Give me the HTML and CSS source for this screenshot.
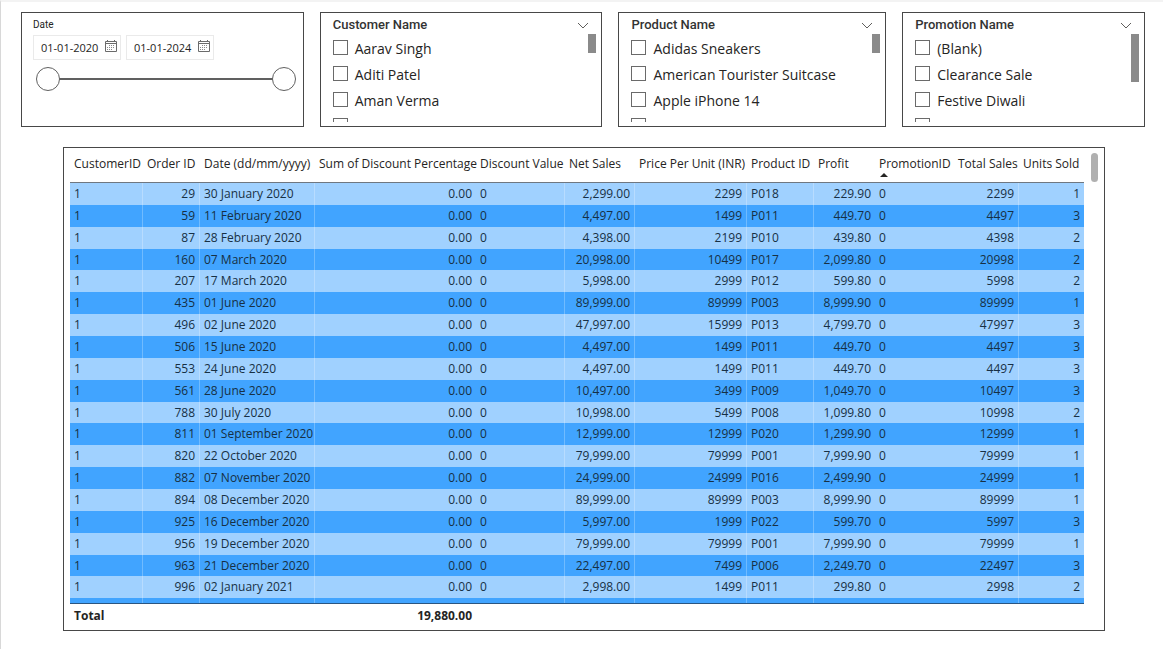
FILE: index.html
```html
<!DOCTYPE html>
<html lang="en">
<head>
<meta charset="utf-8">
<title>Sales report</title>
<link rel="stylesheet" href="styles.css">
</head>
<body>
<main class="report">
  <section class="slicers">
    <fieldset class="card date-card">
      <legend class="date-title">Date</legend>
      <div class="date-fields">
        <div class="date-field">
          <input class="date-input" type="text" value="01-01-2020" aria-label="Start date">
          <button class="icon-button" type="button" aria-label="Pick start date"><svg class="calendar" viewBox="0 0 12 12"><path class="calendar-frame" d="M.5 1.5h11v10H.5zM.5 3.5h11M2.5 0v2M9.5 0v2"/><path class="calendar-days" d="M4 5.5h6M2 7.5h8M2 9.5h6"/></svg></button>
        </div>
        <div class="date-field">
          <input class="date-input" type="text" value="01-01-2024" aria-label="End date">
          <button class="icon-button" type="button" aria-label="Pick end date"><svg class="calendar" viewBox="0 0 12 12"><path class="calendar-frame" d="M.5 1.5h11v10H.5zM.5 3.5h11M2.5 0v2M9.5 0v2"/><path class="calendar-days" d="M4 5.5h6M2 7.5h8M2 9.5h6"/></svg></button>
        </div>
      </div>
      <div class="range">
        <input class="range-input" type="range" min="0" max="100" value="0" aria-label="Range start">
        <input class="range-input" type="range" min="0" max="100" value="100" aria-label="Range end">
      </div>
    </fieldset>

    <section class="card list-card">
      <header class="list-header"><h2 class="list-title">Customer Name</h2><button class="icon-button" type="button" aria-label="Customer options"><svg class="chevron" viewBox="0 0 12 7"><path d="M1 1l5 5 5-5"/></svg></button></header>
      <div class="list-body">
        <div class="options">
          <label class="option"><input class="tick" type="checkbox">Aarav Singh</label>
          <label class="option"><input class="tick" type="checkbox">Aditi Patel</label>
          <label class="option"><input class="tick" type="checkbox">Aman Verma</label>
          <label class="option"><input class="tick" type="checkbox" aria-label="Next customer"></label>
        </div>
        <div class="list-thumb"></div>
      </div>
    </section>

    <section class="card list-card">
      <header class="list-header"><h2 class="list-title">Product Name</h2><button class="icon-button" type="button" aria-label="Product options"><svg class="chevron" viewBox="0 0 12 7"><path d="M1 1l5 5 5-5"/></svg></button></header>
      <div class="list-body">
        <div class="options">
          <label class="option"><input class="tick" type="checkbox">Adidas Sneakers</label>
          <label class="option"><input class="tick" type="checkbox">American Tourister Suitcase</label>
          <label class="option"><input class="tick" type="checkbox">Apple iPhone 14</label>
          <label class="option"><input class="tick" type="checkbox" aria-label="Next product"></label>
        </div>
        <div class="list-thumb"></div>
      </div>
    </section>

    <section class="card list-card">
      <header class="list-header"><h2 class="list-title">Promotion Name</h2><button class="icon-button" type="button" aria-label="Promotion options"><svg class="chevron" viewBox="0 0 12 7"><path d="M1 1l5 5 5-5"/></svg></button></header>
      <div class="list-body">
        <div class="options">
          <label class="option"><input class="tick" type="checkbox">(Blank)</label>
          <label class="option"><input class="tick" type="checkbox">Clearance Sale</label>
          <label class="option"><input class="tick" type="checkbox">Festive Diwali</label>
          <label class="option"><input class="tick" type="checkbox" aria-label="Next promotion"></label>
        </div>
        <div class="list-thumb list-thumb-long"></div>
      </div>
    </section>
  </section>

  <section class="table-card">
    <table class="sales">
      <colgroup>
        <col class="c-customer"><col class="c-order"><col class="c-date"><col class="c-discount"><col class="c-value"><col class="c-net"><col class="c-price"><col class="c-product"><col class="c-profit"><col class="c-promo"><col class="c-total"><col class="c-units">
      </colgroup>
      <thead>
        <tr><th>CustomerID</th><th>Order ID</th><th>Date (dd/mm/yyyy)</th><th>Sum of Discount Percentage</th><th>Discount Value</th><th>Net Sales</th><th>Price Per Unit (INR)</th><th>Product ID</th><th>Profit</th><th class="sorted" aria-sort="ascending">PromotionID</th><th>Total Sales</th><th>Units Sold</th></tr>
      </thead>
      <tbody id="rows"></tbody>
      <tfoot>
        <tr><td>Total</td><td></td><td></td><td class="num">19,880.00</td><td></td><td></td><td></td><td></td><td></td><td></td><td></td><td></td></tr>
      </tfoot>
    </table>
    <div class="table-thumb"></div>
  </section>
</main>
<script src="rows.js"></script>
</body>
</html>
```

FILE: styles.css
```css
* { box-sizing: border-box; }

body {
  margin: 0;
  background: #fff;
  color: #252423;
  font-family: "Open Sans", "Noto Sans", sans-serif;
  font-size: 12px;
}

.report {
  min-height: 100vh;
  padding: 10px 18px 16px 20px;
  border-top: 2px solid #f3f3f3;
  border-left: 1px solid #d8d8d8;
}

.slicers {
  display: grid;
  grid-template-columns: 283fr 283fr 268fr 243fr;
  gap: 16px;
}

.card {
  min-width: 0;
  height: 115px;
  margin: 0;
  border: 1px solid #484848;
}

.icon-button {
  display: flex;
  padding: 0;
  border: 0;
  background: none;
}

/* Date slicer */
.date-card { padding: 5px 7px 0 11px; }

.date-title {
  float: left;
  width: 100%;
  padding: 0;
  font-family: Roboto, sans-serif;
  font-size: 10px;
  line-height: 13px;
}

.date-fields {
  display: flex;
  gap: 5px;
  clear: both;
  padding-top: 4px;
}

.date-field {
  display: flex;
  align-items: center;
  width: 88px;
  height: 25px;
  padding: 0 3px 0 7px;
  border: 1px solid #eaeaea;
}

.date-input {
  flex: 1;
  min-width: 0;
  padding: 0;
  border: 0;
  background: none;
  color: inherit;
  font: 11px "Open Sans", sans-serif;
}

.calendar { width: 12px; height: 12px; margin-bottom: 3px; fill: none; }
.calendar-frame { stroke: #6b6b6b; }
.calendar-days { stroke: #8a8a8a; stroke-dasharray: 1 1; }

.range {
  display: grid;
  align-items: center;
  height: 24px;
  margin: 7px 0 0 3px;
  background: linear-gradient(#606060, #606060) center / calc(100% - 46px) 2px no-repeat;
}

.range-input {
  grid-area: 1 / 1;
  width: 100%;
  height: 24px;
  margin: 0;
  appearance: none;
  background: none;
  pointer-events: none;
}

.range-input::-webkit-slider-thumb {
  width: 24px;
  height: 24px;
  appearance: none;
  border: 1px solid #606060;
  border-radius: 50%;
  background: #fff;
  pointer-events: auto;
}

/* List slicers */
.list-card {
  display: flex;
  flex-direction: column;
  padding: 4px 5px 4px 12px;
}

.list-header {
  display: flex;
  justify-content: space-between;
  align-items: center;
  height: 16px;
  padding-right: 7px;
}

.list-title {
  margin: 0;
  color: #333;
  font-family: Roboto, sans-serif;
  font-size: 13px;
  font-weight: 500;
  line-height: 16px;
}

.chevron { width: 12px; height: 7px; fill: none; stroke: #605e5c; }

.list-body {
  display: flex;
  flex: 1;
  justify-content: space-between;
  min-height: 0;
  overflow: hidden;
}

.options { padding-top: 2px; }

.option {
  display: flex;
  align-items: center;
  gap: 7px;
  height: 26px;
  font-size: 14px;
  white-space: nowrap;
}

.tick {
  width: 15px;
  height: 15px;
  margin: 0 0 1px;
  appearance: none;
  border: 1px solid #6a6a6a;
  background: #fff;
}

.tick:checked { background: #484848; }

.list-thumb {
  width: 8px;
  height: 19px;
  margin-top: 1px;
  background: #8a8a8a;
}

.list-thumb-long { height: 48px; }

/* Sales table */
.table-card {
  display: grid;
  grid-template-columns: 1fr 7px;
  gap: 7px;
  margin: 20px 40px 0 42px;
  padding: 0 6px 3px;
  border: 1px solid #484848;
}

.sales {
  width: 100%;
  table-layout: fixed;
  border-collapse: separate;
  border-spacing: 0;
  line-height: 20px;
  white-space: nowrap;
}

.c-customer { width: 73px; }
.c-order { width: 57px; }
.c-date { width: 115px; }
.c-discount { width: 161px; }
.c-value { width: 89px; }
.c-net { width: 70px; }
.c-price { width: 112px; }
.c-product { width: 67px; }
.c-profit { width: 61px; }
.c-promo { width: 79px; }
.c-total { width: 65px; }
.c-units { width: 65px; }

.sales th,
.sales td {
  padding: 0 4px;
  text-align: left;
}

.sales th {
  height: 35px;
  padding-bottom: 2px;
  border-bottom: 1px solid #6f7780;
  font-weight: 400;
}

.sorted { position: relative; }

.sorted::after {
  content: "";
  position: absolute;
  left: 5px;
  bottom: 5px;
  border: 4px solid transparent;
  border-top: 0;
  border-bottom-color: #252423;
}

.sales .num { text-align: right; }

.sales tbody tr { height: 22px; background: #a0d1ff; color: #173044; }
.sales tbody tr:nth-child(even) { background: #41a4ff; }
.sales tbody tr:nth-child(7n + 4) { height: 21px; }
.sales tbody .ruled { border-right: 1px solid rgb(255 255 255 / 25%); }

.sales tbody .peek { height: 5px; }
.sales tbody .peek td { height: 5px; line-height: 0; }

.sales tfoot td {
  height: 24px;
  border-top: 1px solid #2b5580;
  font-weight: 700;
}

.table-thumb {
  width: 7px;
  height: 29px;
  margin-top: 5px;
  border-radius: 4px;
  background: #b0b0b0;
}
```

FILE: rows.js
```js
// order, date, net sales, unit price, product, profit, total, units
const rows = [
  ["29", "30 January 2020", "2,299.00", "2299", "P018", "229.90", "2299", "1"],
  ["59", "11 February 2020", "4,497.00", "1499", "P011", "449.70", "4497", "3"],
  ["87", "28 February 2020", "4,398.00", "2199", "P010", "439.80", "4398", "2"],
  ["160", "07 March 2020", "20,998.00", "10499", "P017", "2,099.80", "20998", "2"],
  ["207", "17 March 2020", "5,998.00", "2999", "P012", "599.80", "5998", "2"],
  ["435", "01 June 2020", "89,999.00", "89999", "P003", "8,999.90", "89999", "1"],
  ["496", "02 June 2020", "47,997.00", "15999", "P013", "4,799.70", "47997", "3"],
  ["506", "15 June 2020", "4,497.00", "1499", "P011", "449.70", "4497", "3"],
  ["553", "24 June 2020", "4,497.00", "1499", "P011", "449.70", "4497", "3"],
  ["561", "28 June 2020", "10,497.00", "3499", "P009", "1,049.70", "10497", "3"],
  ["788", "30 July 2020", "10,998.00", "5499", "P008", "1,099.80", "10998", "2"],
  ["811", "01 September 2020", "12,999.00", "12999", "P020", "1,299.90", "12999", "1"],
  ["820", "22 October 2020", "79,999.00", "79999", "P001", "7,999.90", "79999", "1"],
  ["882", "07 November 2020", "24,999.00", "24999", "P016", "2,499.90", "24999", "1"],
  ["894", "08 December 2020", "89,999.00", "89999", "P003", "8,999.90", "89999", "1"],
  ["925", "16 December 2020", "5,997.00", "1999", "P022", "599.70", "5997", "3"],
  ["956", "19 December 2020", "79,999.00", "79999", "P001", "7,999.90", "79999", "1"],
  ["963", "21 December 2020", "22,497.00", "7499", "P006", "2,249.70", "22497", "3"],
  ["996", "02 January 2021", "2,998.00", "1499", "P011", "299.80", "2998", "2"]
];

const numeric = new Set([1, 3, 5, 6, 8, 10, 11]);
const ruled = new Set([0, 1, 2, 4, 5, 6, 7, 10]);
const body = document.getElementById("rows");

function addRow(cells) {
  const tr = body.insertRow();
  cells.forEach((text, i) => {
    const td = tr.insertCell();
    td.textContent = text;
    if (numeric.has(i)) td.classList.add("num");
    if (ruled.has(i)) td.classList.add("ruled");
  });
  return tr;
}

for (const [order, date, net, price, product, profit, total, units] of rows) {
  addRow(["1", order, date, "0.00", "0", net, price, product, profit, "0", total, units]);
}
addRow(Array(12).fill("")).className = "peek";
```
